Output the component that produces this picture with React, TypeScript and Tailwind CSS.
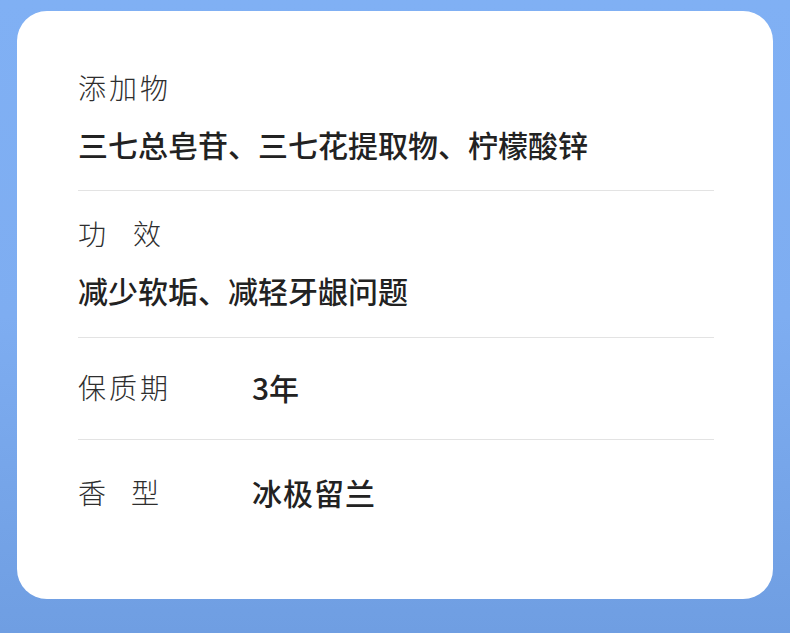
const cjk = { fontFamily: '"Noto Sans CJK SC", "Noto Sans", sans-serif' };

function Label({ children }: { children: React.ReactNode }) {
  return (
    <div className="text-[28px] leading-[40px] font-light tracking-[3px] text-[#2e2e2e]">
      {children}
    </div>
  );
}

function Value({ children, wide }: { children: React.ReactNode; wide?: boolean }) {
  return (
    <div
      className={
        wide
          ? "text-[30px] leading-[40px] font-medium tracking-[1px] text-[#222222]"
          : "text-[30px] leading-[40px] font-medium text-[#222222]"
      }
    >
      {children}
    </div>
  );
}

export default function App() {
  return (
    <div
      className="w-[790px] h-[633px] overflow-hidden bg-gradient-to-b from-[#80b0f4] via-[#7eadf1] to-[#6f9ee2] pt-[11px] px-[17px]"
      style={cjk}
    >
      <div className="h-[588px] rounded-[30px] bg-white px-[61px] pt-[56px]">
        {/* 添加物 */}
        <div className="border-b border-[#e3e3e3] pb-[26px] mr-[-2px]">
          <Label>添加物</Label>
          <div className="mt-[17px]">
            <Value>三七总皂苷、三七花提取物、柠檬酸锌</Value>
          </div>
        </div>

        {/* 功效 */}
        <div className="border-b border-[#e3e3e3] pt-[22px] pb-[27px] mr-[-2px]">
          <Label>
            <span>功</span>
            <span className="ml-[24px]">效</span>
          </Label>
          <div className="mt-[17px]">
            <Value>减少软垢、减轻牙龈问题</Value>
          </div>
        </div>

        {/* 保质期 */}
        <div className="flex items-center border-b border-[#e3e3e3] pt-[29px] pb-[32px] mr-[-2px]">
          <div className="w-[174px]">
            <Label>保质期</Label>
          </div>
          <Value>3年</Value>
        </div>

        {/* 香型 */}
        <div className="flex items-center pt-[32px]">
          <div className="w-[174px]">
            <Label>
              <span>香</span>
              <span className="ml-[22px]">型</span>
            </Label>
          </div>
          <Value wide>冰极留兰</Value>
        </div>
      </div>
    </div>
  );
}
